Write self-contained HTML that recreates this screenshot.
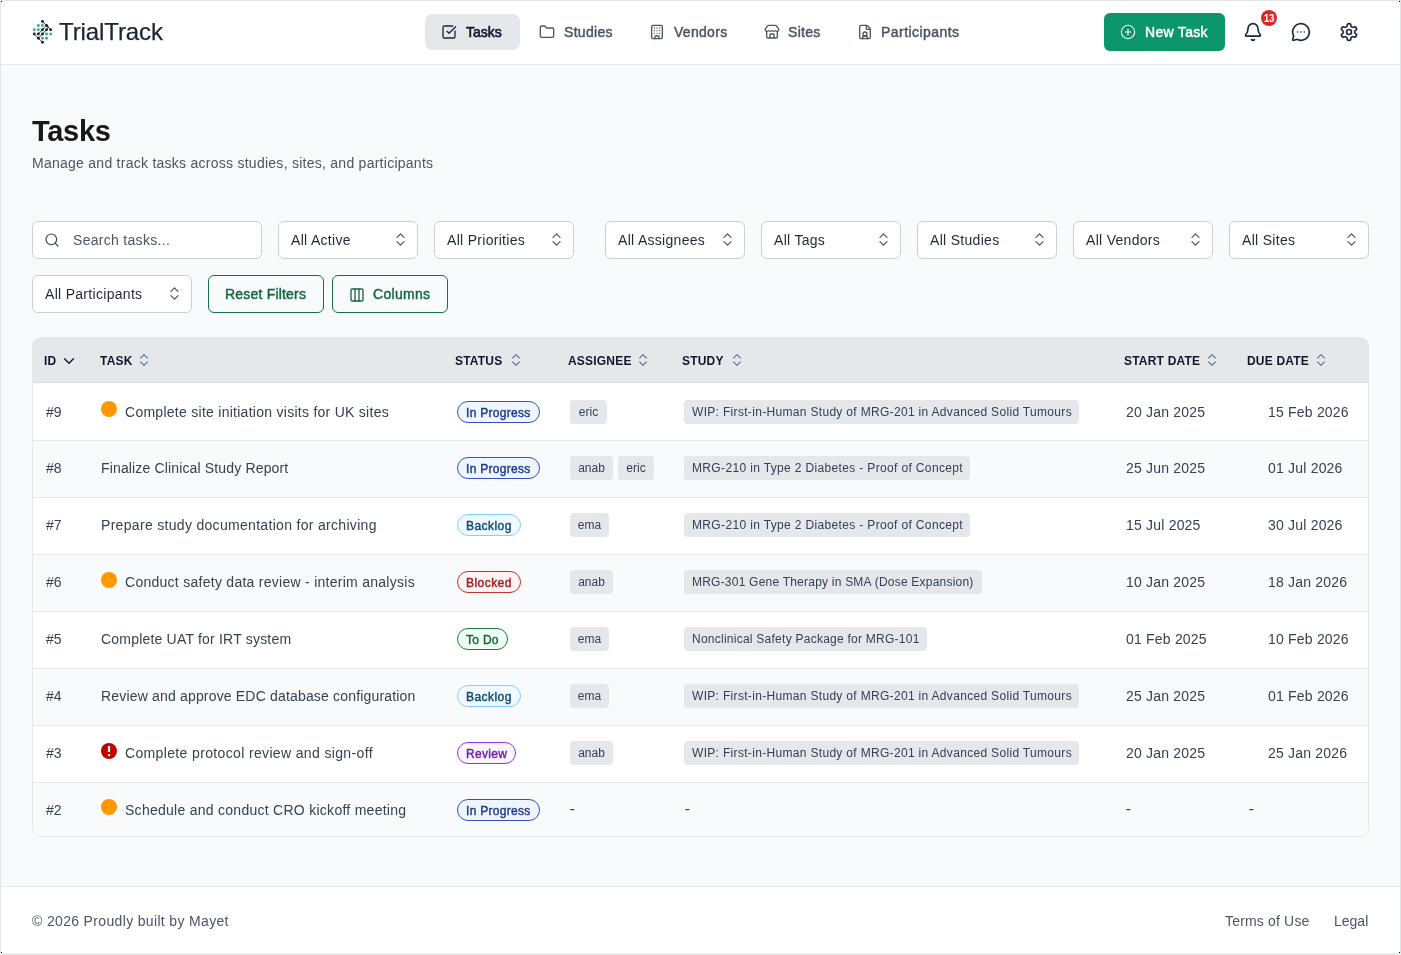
<!DOCTYPE html>
<html><head><meta charset="utf-8">
<style>
*{box-sizing:border-box;margin:0;padding:0}
html,body{width:1401px;height:955px;overflow:hidden}
body{will-change:transform;font-family:"Liberation Sans",sans-serif;background:#f9fafb;position:relative;color:#374151}
.abs{position:absolute}
svg{display:block}
.ico{position:absolute;fill:none;stroke:currentColor;stroke-width:2;stroke-linecap:round;stroke-linejoin:round}
.txt{position:absolute;white-space:nowrap}
.fl{position:absolute;z-index:60;background:#e2e3e7}
.dotc{position:absolute;z-index:61;width:1px;height:1px;background:#000}
header{position:absolute;left:0;top:0;width:1401px;height:65px;background:#fff;border-bottom:1px solid #e5e7eb}
.nav{position:absolute;top:14px;height:36px;font-size:14px;color:#4b5563;-webkit-text-stroke-width:0.45px}
.nav span{position:absolute;top:10px;line-height:16px;white-space:nowrap;letter-spacing:0.3px}
.sel{position:absolute;height:38px;background:#fff;border:1px solid #cdcfd3;border-radius:6px;font-size:14px;color:#1f2937}
.sel span{position:absolute;left:12px;top:10px;line-height:16px;white-space:nowrap;letter-spacing:0.3px}
.sel .ud{left:auto;right:8px;top:10px;color:#4b5563;stroke-width:1.7}
.gbtn{position:absolute;height:38px;border:1px solid #157044;border-radius:6px;color:#17673f;font-size:14px;-webkit-text-stroke-width:0.45px}
.gbtn span{position:absolute;top:10px;line-height:16px;white-space:nowrap;letter-spacing:0.2px}
.table{position:absolute;left:32px;top:337px;width:1337px;height:500px;border:1px solid #e5e7eb;border-radius:8px;overflow:hidden;background:#fff}
.thead{position:absolute;left:0;top:0;width:100%;height:45px;background:#e5e7eb;border-bottom:1px solid #dcdde0}
.th{position:absolute;top:16px;font-size:12px;line-height:14px;font-weight:bold;color:#111827;letter-spacing:0.2px;white-space:nowrap}
.th .srt{position:absolute;top:-2px;color:#64748b;stroke-width:1.7}
.row{position:absolute;left:0;width:100%;background:#fff;border-bottom:1px solid #e5e7eb}
.row.alt{background:#f9fafb}
.row.last{border-bottom:none}
.up .c{transform:translateY(calc(-50% - 1px))}
.up .pdot{margin-top:-2px}
.c{position:absolute;top:50%;transform:translateY(-50%)}
.td{font-size:14px;line-height:18px;color:#374151;white-space:nowrap}
.pdot{width:16px;height:16px;border-radius:50%;background:#ff9800;margin-top:-3px}
.pdot.alert{background:#c00000}
.task{letter-spacing:0.27px}
.badge{height:22px;padding:1px 8px 0;border-radius:11px;border:1px solid;font-size:12px;line-height:20px;-webkit-text-stroke-width:0.4px;white-space:nowrap;letter-spacing:0.3px}
.badge.prog{border-color:#3451c0;background:#eff5ff;color:#1e3a8a}
.badge.back{border-color:#7dd3fc;background:#f0f9ff;color:#0c4a6e}
.badge.block{border-color:#c53030;background:#fef2f2;color:#991b1b}
.badge.todo{border-color:#15803d;background:#f0fdf4;color:#166534}
.badge.rev{border-color:#9333ea;background:#faf5ff;color:#6b21a8}
.chip{height:24px;border-radius:4px;background:#e5e7eb;color:#374151;font-size:12px;line-height:24px;white-space:nowrap;text-align:center}
.chip.study{text-align:left;padding-left:8px;letter-spacing:0.29px}
.date{letter-spacing:0.2px}
footer{position:absolute;left:0;top:886px;width:1401px;height:69px;background:#fff;border-top:1px solid #e5e7eb;font-size:14px;color:#4b5563}
footer .txt{top:25px;line-height:18px}
</style></head><body>
<div class="fl" style="left:0;top:0;width:1401px;height:1px"></div>
<div class="fl" style="left:0;top:0;width:1px;height:955px"></div>
<div class="fl" style="left:1400px;top:0;width:1px;height:955px"></div>
<div class="fl" style="left:0;top:953px;width:1401px;height:1px;background:#eff0f2"></div>
<div class="fl" style="left:0;top:954px;width:1401px;height:1px"></div>
<div class="dotc" style="left:1px;top:1px"></div>
<div class="dotc" style="left:1399px;top:1px"></div>
<div class="dotc" style="left:1px;top:952px"></div>
<div class="dotc" style="left:1399px;top:952px"></div>
<header>
<svg class="abs" style="left:30px;top:17px" width="26" height="28" viewBox="0 0 26 28"><path d="M12.46 4.37 L16.57 8.48 L20.7 12.73" fill="none" stroke="#1e2433" stroke-width="0.9" stroke-linecap="round" stroke-linejoin="round"/><path d="M4.25 16.98 L8.36 21.2 L12.46 25.3" fill="none" stroke="#1e2433" stroke-width="0.9" stroke-linecap="round" stroke-linejoin="round"/><path d="M8.36 21.2 Q12.46 16.98 12.46 16.98 L16.57 12.73 Q19.7 8.48 16.57 8.48" fill="none" stroke="#1e2433" stroke-width="0.9"/><path d="M8.36 16.98 L12.46 12.73 Q15.07 9.98 16.57 8.48" fill="none" stroke="#1e2433" stroke-width="0.9"/><circle cx="12.46" cy="4.37" r="1.45" fill="#1e2433"/><circle cx="8.36" cy="8.48" r="1.45" fill="#2fb477"/><circle cx="12.46" cy="8.48" r="1.45" fill="#2fb477"/><circle cx="16.57" cy="8.48" r="1.45" fill="#1e2433"/><circle cx="4.25" cy="12.73" r="1.45" fill="#2fb477"/><circle cx="8.36" cy="12.73" r="1.45" fill="#2fb477"/><circle cx="12.46" cy="12.73" r="1.45" fill="#1e2433"/><circle cx="16.57" cy="12.73" r="1.45" fill="#1e2433"/><circle cx="20.7" cy="12.73" r="1.45" fill="#1e2433"/><circle cx="4.25" cy="16.98" r="1.45" fill="#1e2433"/><circle cx="8.36" cy="16.98" r="1.45" fill="#1e2433"/><circle cx="12.46" cy="16.98" r="1.45" fill="#1e2433"/><circle cx="16.57" cy="16.98" r="1.45" fill="#2fb477"/><circle cx="20.7" cy="16.98" r="1.45" fill="#2fb477"/><circle cx="8.36" cy="21.2" r="1.45" fill="#1e2433"/><circle cx="12.46" cy="21.2" r="1.45" fill="#2fb477"/><circle cx="16.57" cy="21.2" r="1.45" fill="#2fb477"/><circle cx="12.46" cy="25.3" r="1.45" fill="#1e2433"/></svg>
<div class="txt" style="left:59px;top:17px;font-size:24px;line-height:30px;color:#1e2533;-webkit-text-stroke:0.25px #1e2533;letter-spacing:-0.1px">TrialTrack</div>
<div class="nav" style="left:425px;width:95px;background:#e5e7eb;border-radius:7px;color:#111827"><svg class="ico" style="left:16px;top:10px;color:#1f2937" width="16" height="16" viewBox="0 0 24 24"><path d="M21 10.5V19a2 2 0 0 1-2 2H5a2 2 0 0 1-2-2V5a2 2 0 0 1 2-2h12.5"/><path d="m9 11 3 3L22 4"/></svg><span style="left:41px;letter-spacing:0;-webkit-text-stroke-width:0.6px">Tasks</span></div>
<div class="nav" style="left:530px;width:95px"><svg class="ico" style="left:9px;top:10px;" width="16" height="16" viewBox="0 0 24 24"><path d="M20 20a2 2 0 0 0 2-2V8a2 2 0 0 0-2-2h-7.9a2 2 0 0 1-1.69-.9L9.6 3.9A2 2 0 0 0 7.93 3H4a2 2 0 0 0-2 2v13a2 2 0 0 0 2 2Z"/></svg><span style="left:34px">Studies</span></div>
<div class="nav" style="left:640px;width:100px"><svg class="ico" style="left:9px;top:10px;" width="16" height="16" viewBox="0 0 24 24"><path d="M12 10h.01"/><path d="M12 14h.01"/><path d="M12 6h.01"/><path d="M16 10h.01"/><path d="M16 14h.01"/><path d="M16 6h.01"/><path d="M8 10h.01"/><path d="M8 14h.01"/><path d="M8 6h.01"/><path d="M9 22v-3a1 1 0 0 1 1-1h4a1 1 0 0 1 1 1v3"/><rect x="4" y="2" width="16" height="20" rx="2"/></svg><span style="left:34px">Vendors</span></div>
<div class="nav" style="left:755px;width:80px"><svg class="ico" style="left:9px;top:10px;" width="16" height="16" viewBox="0 0 24 24"><path d="M15 21v-5a1 1 0 0 0-1-1h-4a1 1 0 0 0-1 1v5"/><path d="M17.774 10.31a1.12 1.12 0 0 0-1.549 0 2.5 2.5 0 0 1-3.451 0 1.12 1.12 0 0 0-1.548 0 2.5 2.5 0 0 1-3.452 0 1.12 1.12 0 0 0-1.549 0 2.5 2.5 0 0 1-3.77-3.248l2.889-4.184A2 2 0 0 1 7 2h10a2 2 0 0 1 1.653.873l2.895 4.192a2.5 2.5 0 0 1-3.774 3.244"/><path d="M4 10.95V19a2 2 0 0 0 2 2h12a2 2 0 0 0 2-2v-8.05"/></svg><span style="left:33px">Sites</span></div>
<div class="nav" style="left:848px;width:120px"><svg class="ico" style="left:9px;top:10px;" width="16" height="16" viewBox="0 0 24 24"><path d="M6 22a2 2 0 0 1-2-2V4a2 2 0 0 1 2-2h8a2.4 2.4 0 0 1 1.704.706l3.588 3.588A2.4 2.4 0 0 1 20 8v12a2 2 0 0 1-2 2z"/><path d="M14 2v5a1 1 0 0 0 1 1h5"/><path d="M16 22a4 4 0 0 0-8 0"/><circle cx="12" cy="15" r="3"/></svg><span style="left:33px;letter-spacing:0.45px">Participants</span></div>
<div class="abs" style="left:1104px;top:13px;width:121px;height:38px;background:#0b9669;border-radius:6px;color:#fff"><svg class="ico" style="left:16px;top:11px;stroke-width:1.6" width="16" height="16" viewBox="0 0 24 24"><circle cx="12" cy="12" r="10"/><path d="M8 12h8"/><path d="M12 8v8"/></svg><span class="txt" style="left:41px;top:11px;font-size:14px;line-height:16px;-webkit-text-stroke-width:0.45px;letter-spacing:0.3px">New Task</span></div>
<svg class="ico" style="left:1243px;top:22px;color:#1e293b" width="20" height="20" viewBox="0 0 24 24"><path d="M10.268 21a2 2 0 0 0 3.464 0"/><path d="M3.262 15.326A1 1 0 0 0 4 17h16a1 1 0 0 0 .74-1.673C19.41 13.956 18 12.499 18 8A6 6 0 0 0 6 8c0 4.499-1.411 5.956-2.738 7.326"/></svg>
<div class="abs" style="left:1261px;top:10px;width:16px;height:16px;border-radius:8px;background:#dc2626;color:#fff;font-size:10px;font-weight:bold;line-height:17px;text-align:center;letter-spacing:-0.3px">13</div>
<svg class="ico" style="left:1291px;top:22px;color:#1e293b" width="20" height="20" viewBox="0 0 24 24"><path d="M2.992 16.342a2 2 0 0 1 .094 1.167l-1.065 3.29a1 1 0 0 0 1.236 1.168l3.413-.998a2 2 0 0 1 1.099.092 10 10 0 1 0-4.777-4.719"/><path d="M8 12h.01"/><path d="M12 12h.01"/><path d="M16 12h.01"/></svg>
<svg class="ico" style="left:1339px;top:22px;color:#1e293b" width="20" height="20" viewBox="0 0 24 24"><path d="M12.22 2h-.44a2 2 0 0 0-2 2v.18a2 2 0 0 1-1 1.73l-.43.25a2 2 0 0 1-2 0l-.15-.08a2 2 0 0 0-2.73.73l-.22.38a2 2 0 0 0 .73 2.73l.15.1a2 2 0 0 1 1 1.72v.51a2 2 0 0 1-1 1.74l-.15.09a2 2 0 0 0-.73 2.73l.22.38a2 2 0 0 0 2.73.73l.15-.08a2 2 0 0 1 2 0l.43.25a2 2 0 0 1 1 1.73V20a2 2 0 0 0 2 2h.44a2 2 0 0 0 2-2v-.18a2 2 0 0 1 1-1.73l.43-.25a2 2 0 0 1 2 0l.15.08a2 2 0 0 0 2.73-.73l.22-.39a2 2 0 0 0-.73-2.73l-.15-.08a2 2 0 0 1-1-1.74v-.5a2 2 0 0 1 1-1.74l.15-.09a2 2 0 0 0 .73-2.73l-.22-.38a2 2 0 0 0-2.73-.73l-.15.08a2 2 0 0 1-2 0l-.43-.25a2 2 0 0 1-1-1.73V4a2 2 0 0 0-2-2z"/><circle cx="12" cy="12" r="3"/></svg>
</header>
<div class="txt" style="left:32px;top:113px;font-size:29px;line-height:36px;font-weight:bold;color:#18181b;letter-spacing:-0.3px">Tasks</div>
<div class="txt" style="left:32px;top:154px;font-size:14px;line-height:18px;color:#4b5563;letter-spacing:0.26px">Manage and track tasks across studies, sites, and participants</div>
<div class="sel" style="left:32px;top:221px;width:230px"><svg class="ico" style="left:11px;top:10px;color:#3f4a5a;stroke-width:1.8" width="16" height="16" viewBox="0 0 24 24"><circle cx="11" cy="11" r="8"/><path d="m21 21-4.3-4.3"/></svg><span style="left:40px;color:#4b5563">Search tasks...</span></div>
<div class="sel" style="left:278px;top:221px;width:140px"><span>All Active</span><svg class="ico" style="left:113px;top:9px;color:#4b5563;stroke-width:1.7" width="17" height="17" viewBox="0 0 24 24"><path d="m7 15 5 5 5-5"/><path d="m7 9 5-5 5 5"/></svg></div>
<div class="sel" style="left:434px;top:221px;width:140px"><span>All Priorities</span><svg class="ico" style="left:113px;top:9px;color:#4b5563;stroke-width:1.7" width="17" height="17" viewBox="0 0 24 24"><path d="m7 15 5 5 5-5"/><path d="m7 9 5-5 5 5"/></svg></div>
<div class="sel" style="left:605px;top:221px;width:140px"><span>All Assignees</span><svg class="ico" style="left:113px;top:9px;color:#4b5563;stroke-width:1.7" width="17" height="17" viewBox="0 0 24 24"><path d="m7 15 5 5 5-5"/><path d="m7 9 5-5 5 5"/></svg></div>
<div class="sel" style="left:761px;top:221px;width:140px"><span>All Tags</span><svg class="ico" style="left:113px;top:9px;color:#4b5563;stroke-width:1.7" width="17" height="17" viewBox="0 0 24 24"><path d="m7 15 5 5 5-5"/><path d="m7 9 5-5 5 5"/></svg></div>
<div class="sel" style="left:917px;top:221px;width:140px"><span>All Studies</span><svg class="ico" style="left:113px;top:9px;color:#4b5563;stroke-width:1.7" width="17" height="17" viewBox="0 0 24 24"><path d="m7 15 5 5 5-5"/><path d="m7 9 5-5 5 5"/></svg></div>
<div class="sel" style="left:1073px;top:221px;width:140px"><span>All Vendors</span><svg class="ico" style="left:113px;top:9px;color:#4b5563;stroke-width:1.7" width="17" height="17" viewBox="0 0 24 24"><path d="m7 15 5 5 5-5"/><path d="m7 9 5-5 5 5"/></svg></div>
<div class="sel" style="left:1229px;top:221px;width:140px"><span>All Sites</span><svg class="ico" style="left:113px;top:9px;color:#4b5563;stroke-width:1.7" width="17" height="17" viewBox="0 0 24 24"><path d="m7 15 5 5 5-5"/><path d="m7 9 5-5 5 5"/></svg></div>
<div class="sel" style="left:32px;top:275px;width:160px"><span>All Participants</span><svg class="ico" style="left:133px;top:9px;color:#4b5563;stroke-width:1.7" width="17" height="17" viewBox="0 0 24 24"><path d="m7 15 5 5 5-5"/><path d="m7 9 5-5 5 5"/></svg></div>
<div class="gbtn" style="left:208px;top:275px;width:116px"><span style="left:16px">Reset Filters</span></div>
<div class="gbtn" style="left:332px;top:275px;width:116px"><svg class="ico" style="left:16px;top:11px;" width="16" height="16" viewBox="0 0 24 24"><rect width="18" height="18" x="3" y="3" rx="2"/><path d="M9 3v18"/><path d="M15 3v18"/></svg><span style="left:40px;letter-spacing:0.3px">Columns</span></div>
<div class="table">
<div class="thead">
<div class="th" style="left:11px">ID</div>
<svg class="ico" style="left:26.55px;top:14px;color:#111827;stroke-width:1.8" width="18" height="18" viewBox="0 0 24 24"><path d="m6 9 6 6 6-6"/></svg>
<div class="th" style="left:67px">TASK</div>
<svg class="ico" style="left:103.1px;top:14px;color:#64748b;stroke-width:1.6" width="16" height="16" viewBox="0 0 24 24"><path d="m7 15 5 5 5-5"/><path d="m7 9 5-5 5 5"/></svg>
<div class="th" style="left:422px">STATUS</div>
<svg class="ico" style="left:474.5px;top:14px;color:#64748b;stroke-width:1.6" width="16" height="16" viewBox="0 0 24 24"><path d="m7 15 5 5 5-5"/><path d="m7 9 5-5 5 5"/></svg>
<div class="th" style="left:535px">ASSIGNEE</div>
<svg class="ico" style="left:601.6px;top:14px;color:#64748b;stroke-width:1.6" width="16" height="16" viewBox="0 0 24 24"><path d="m7 15 5 5 5-5"/><path d="m7 9 5-5 5 5"/></svg>
<div class="th" style="left:649px">STUDY</div>
<svg class="ico" style="left:695.8px;top:14px;color:#64748b;stroke-width:1.6" width="16" height="16" viewBox="0 0 24 24"><path d="m7 15 5 5 5-5"/><path d="m7 9 5-5 5 5"/></svg>
<div class="th" style="left:1091px">START DATE</div>
<svg class="ico" style="left:1171.1px;top:14px;color:#64748b;stroke-width:1.6" width="16" height="16" viewBox="0 0 24 24"><path d="m7 15 5 5 5-5"/><path d="m7 9 5-5 5 5"/></svg>
<div class="th" style="left:1214px">DUE DATE</div>
<svg class="ico" style="left:1279.8px;top:14px;color:#64748b;stroke-width:1.6" width="16" height="16" viewBox="0 0 24 24"><path d="m7 15 5 5 5-5"/><path d="m7 9 5-5 5 5"/></svg>
</div>
<div class="row" style="top:45px;height:58px">
<div class="c td" style="left:13px">#9</div>
<div class="c pdot" style="left:68px"></div>
<div class="c td task" style="left:92px;letter-spacing:0.27px">Complete site initiation visits for UK sites</div>
<div class="c badge prog" style="left:424px">In Progress</div>
<div class="c chip" style="left:537px;width:37px">eric</div>
<div class="c chip study" style="left:651px;width:395px;letter-spacing:0.32px">WIP: First-in-Human Study of MRG-201 in Advanced Solid Tumours</div>
<div class="c td date" style="left:1093px">20 Jan 2025</div>
<div class="c td date" style="left:1235px">15 Feb 2026</div>
</div>
<div class="row alt up" style="top:103px;height:57px">
<div class="c td" style="left:13px">#8</div>
<div class="c td task" style="left:68px;letter-spacing:0.15px">Finalize Clinical Study Report</div>
<div class="c badge prog" style="left:424px">In Progress</div>
<div class="c chip" style="left:537px;width:43px">anab</div>
<div class="c chip" style="left:585px;width:36px">eric</div>
<div class="c chip study" style="left:651px;width:286px;letter-spacing:0.35px">MRG-210 in Type 2 Diabetes - Proof of Concept</div>
<div class="c td date" style="left:1093px">25 Jun 2025</div>
<div class="c td date" style="left:1235px">01 Jul 2026</div>
</div>
<div class="row up" style="top:160px;height:57px">
<div class="c td" style="left:13px">#7</div>
<div class="c td task" style="left:68px;letter-spacing:0.31px">Prepare study documentation for archiving</div>
<div class="c badge back" style="left:424px;letter-spacing:0.45px">Backlog</div>
<div class="c chip" style="left:537px;width:39px">ema</div>
<div class="c chip study" style="left:651px;width:286px;letter-spacing:0.35px">MRG-210 in Type 2 Diabetes - Proof of Concept</div>
<div class="c td date" style="left:1093px">15 Jul 2025</div>
<div class="c td date" style="left:1235px">30 Jul 2026</div>
</div>
<div class="row alt up" style="top:217px;height:57px">
<div class="c td" style="left:13px">#6</div>
<div class="c pdot" style="left:68px"></div>
<div class="c td task" style="left:92px;letter-spacing:0.27px">Conduct safety data review - interim analysis</div>
<div class="c badge block" style="left:424px;letter-spacing:0.45px">Blocked</div>
<div class="c chip" style="left:537px;width:43px">anab</div>
<div class="c chip study" style="left:651px;width:298px;letter-spacing:0.22px">MRG-301 Gene Therapy in SMA (Dose Expansion)</div>
<div class="c td date" style="left:1093px">10 Jan 2025</div>
<div class="c td date" style="left:1235px">18 Jan 2026</div>
</div>
<div class="row up" style="top:274px;height:57px">
<div class="c td" style="left:13px">#5</div>
<div class="c td task" style="left:68px;letter-spacing:0.2px">Complete UAT for IRT system</div>
<div class="c badge todo" style="left:424px">To Do</div>
<div class="c chip" style="left:537px;width:39px">ema</div>
<div class="c chip study" style="left:651px;width:243px;letter-spacing:0.25px">Nonclinical Safety Package for MRG-101</div>
<div class="c td date" style="left:1093px">01 Feb 2025</div>
<div class="c td date" style="left:1235px">10 Feb 2026</div>
</div>
<div class="row alt up" style="top:331px;height:57px">
<div class="c td" style="left:13px">#4</div>
<div class="c td task" style="left:68px;letter-spacing:0.175px">Review and approve EDC database configuration</div>
<div class="c badge back" style="left:424px;letter-spacing:0.45px">Backlog</div>
<div class="c chip" style="left:537px;width:39px">ema</div>
<div class="c chip study" style="left:651px;width:395px;letter-spacing:0.32px">WIP: First-in-Human Study of MRG-201 in Advanced Solid Tumours</div>
<div class="c td date" style="left:1093px">25 Jan 2025</div>
<div class="c td date" style="left:1235px">01 Feb 2026</div>
</div>
<div class="row up" style="top:388px;height:57px">
<div class="c td" style="left:13px">#3</div>
<div class="c pdot alert" style="left:68px"><svg width="16" height="16" viewBox="0 0 16 16"><rect x="6.9" y="3.1" width="2.2" height="5.9" rx="0.3" fill="#fff"/><rect x="6.9" y="11.2" width="2.2" height="2" fill="#fff"/></svg></div>
<div class="c td task" style="left:92px;letter-spacing:0.355px">Complete protocol review and sign-off</div>
<div class="c badge rev" style="left:424px">Review</div>
<div class="c chip" style="left:537px;width:43px">anab</div>
<div class="c chip study" style="left:651px;width:395px;letter-spacing:0.32px">WIP: First-in-Human Study of MRG-201 in Advanced Solid Tumours</div>
<div class="c td date" style="left:1093px">20 Jan 2025</div>
<div class="c td date" style="left:1235px">25 Jan 2026</div>
</div>
<div class="row alt last" style="top:445px;height:53px">
<div class="c td" style="left:13px">#2</div>
<div class="c pdot" style="left:68px"></div>
<div class="c td task" style="left:92px;letter-spacing:0.27px">Schedule and conduct CRO kickoff meeting</div>
<div class="c badge prog" style="left:424px">In Progress</div>
<div class="c td" style="left:537px;transform:translateY(calc(-50% - 1px)) scaleX(1.2)">-</div>
<div class="c td" style="left:652px;transform:translateY(calc(-50% - 1px)) scaleX(1.2)">-</div>
<div class="c td" style="left:1093px;transform:translateY(calc(-50% - 1px)) scaleX(1.2)">-</div>
<div class="c td" style="left:1216px;transform:translateY(calc(-50% - 1px)) scaleX(1.2)">-</div>
</div>
</div>
<footer><div class="txt" style="left:32px;letter-spacing:0.34px">© 2026 Proudly built by Mayet</div><div class="txt" style="left:1225px;letter-spacing:0.17px">Terms of Use</div><div class="txt" style="left:1334px">Legal</div></footer>
</body></html>
